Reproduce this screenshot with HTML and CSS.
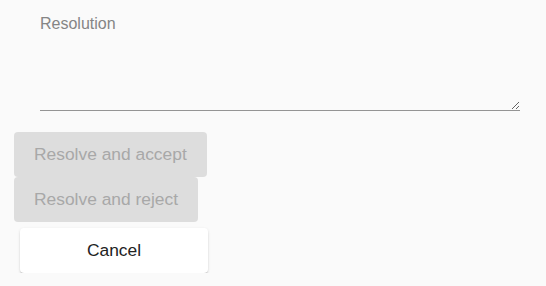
FILE: index.html
```html
<!DOCTYPE html>
<html>
<head>
<meta charset="utf-8">
<link rel="stylesheet" href="styles.css">
</head>
<body>
<div class="field">
  <label class="label" for="res">Resolution</label>
  <textarea class="input" id="res"></textarea>
</div>
<div class="actions">
  <button class="btn btn-disabled" disabled>Resolve and accept</button>
  <button class="btn btn-disabled" disabled>Resolve and reject</button>
  <button class="btn btn-cancel">Cancel</button>
</div>
</body>
</html>
```
FILE: styles.css
```css
html, body {
  margin: 0;
  padding: 0;
  background: #fafafa;
  font-family: "Liberation Sans", Arial, sans-serif;
}
.field {
  display: flex;
  flex-direction: column;
  width: 480px;
  padding: 15px 0 0 40px;
}
.label {
  font-size: 16px;
  line-height: 18px;
  color: #858585;
}
.input {
  box-sizing: border-box;
  width: 480px;
  height: 78px;
  margin: 0;
  padding: 4px 0;
  border: none;
  border-bottom: 1px solid #949494;
  background: transparent;
  font: 16px "Liberation Sans", Arial, sans-serif;
  outline: none;
  resize: vertical;
}
.actions {
  display: flex;
  flex-direction: column;
  align-items: flex-start;
  padding: 21px 0 0 14px;
}
.btn {
  height: 45px;
  padding: 0 20px;
  border: none;
  border-radius: 4px;
  font: 17.4px "Liberation Sans", Arial, sans-serif;
  margin: 0;
}
.btn-disabled {
  background: #dddddd;
  color: #a8a8a8;
}
.btn-cancel {
  margin: 6px 0 0 6px;
  width: 188px;
  background: #ffffff;
  color: #222222;
  box-shadow: 0 2px 2px -1px rgba(0, 0, 0, 0.3), 0 1px 3px rgba(0, 0, 0, 0.12);
}
```
